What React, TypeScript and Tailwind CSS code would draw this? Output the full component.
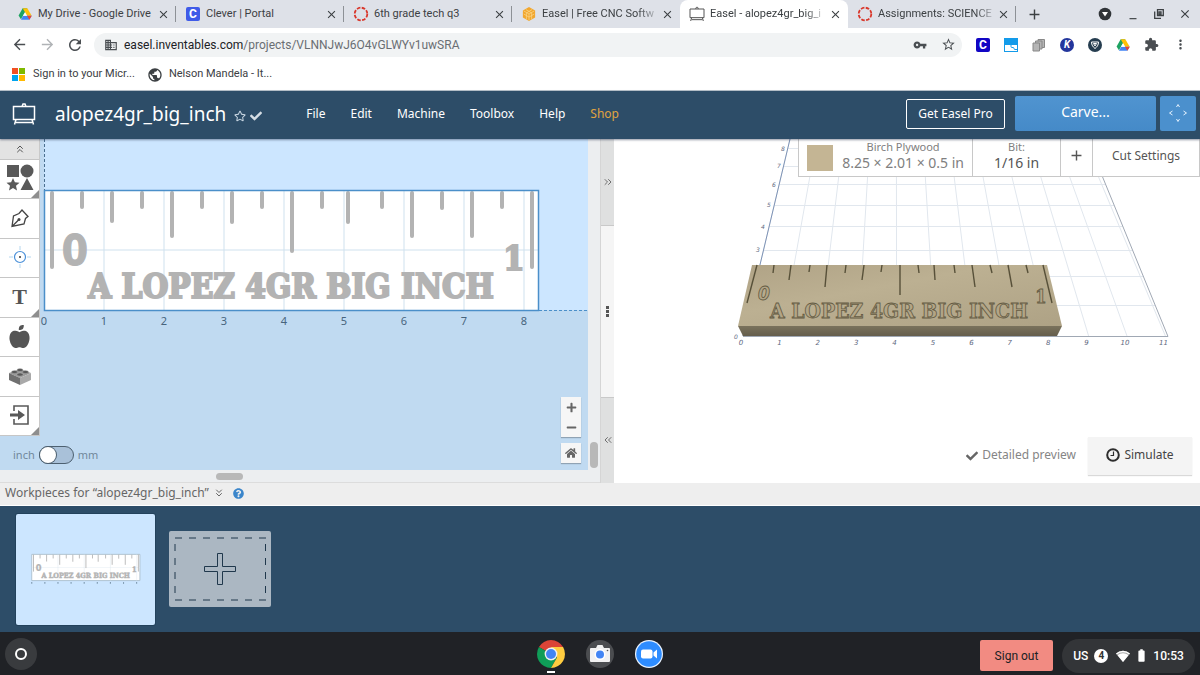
/**
 * @fileoverview Easel project screen inside a Chrome OS browser window:
 * tab strip, toolbar, 2D canvas, 3D preview, workpieces tray and shelf.
 */

import type { ReactNode } from 'react';
import {
  MdArrowBack,
  MdArrowForward,
  MdClose,
  MdDomain,
  MdExtension,
  MdMinimize,
  MdMoreVert,
  MdAdd,
  MdPublic,
  MdRefresh,
  MdStarBorder,
  MdVpnKey,
  MdBatteryFull,
} from 'react-icons/md';
import { FaAppleAlt, FaCheck, FaHome, FaMinus, FaPlus, FaQuestionCircle, FaRegStar } from 'react-icons/fa';
import { ChevronsDown, ChevronsLeft, ChevronsRight, ChevronsUp } from 'lucide-react';

const SLAB = '"DejaVu Serif Condensed", "DejaVu Serif", serif';
const BLOCK = '"DejaVu Sans Condensed", "DejaVu Sans", sans-serif';

/* ---------- Logos ---------- */

function DriveLogo() {
  return (
    <svg viewBox="0 0 24 22" className="h-3.5 w-3.5 shrink-0">
      <path d="M8 1h8L5 20 1 13.500z" fill="#1ea362" />
      <path d="M8 1h8l7.500 13h-8z" fill="#ffc107" />
      <path d="M9 14h14.500L19.500 21H5z" fill="#4285f4" />
      <path d="M15.500 14h8L19.500 21z" fill="#ea4335" />
      <path d="M12 8l3.500 6H8.500z" fill="#fff" />
    </svg>
  );
}

function CleverLogo({ color }: { color: string }) {
  return (
    <span className="flex h-3.5 w-3.5 shrink-0 items-center justify-center rounded-xs text-[12px] leading-none font-bold text-white" style={{ backgroundColor: color }}>
      C
    </span>
  );
}

function CanvasLogo() {
  return (
    <svg viewBox="0 0 16 16" className="h-4 w-4 shrink-0">
      <circle cx="8" cy="8" r="6.300" fill="none" stroke="#d9372b" strokeWidth="1.800" strokeDasharray="3.550 1.400" />
    </svg>
  );
}

function InventablesLogo() {
  return (
    <svg viewBox="0 0 16 16" className="h-3.5 w-3.5 shrink-0">
      <path d="M8 0l7 4v8l-7 4-7-4V4z" fill="#f2a72e" />
      <path d="M8 8v7M8 8L2 4.500M8 8l6-3.500M5 6.500V14M11 6.500V14M4.500 3l6 3.500M11.500 3l-6 3.500M2 8l6 3.500L14 8" stroke="#fbd88e" strokeWidth=".8" fill="none" />
    </svg>
  );
}

function EaselLogo({ className }: { className: string }) {
  return (
    <svg viewBox="0 0 24 24" className={className} fill="none" stroke="currentColor" strokeWidth="1.500">
      <path d="M1.500 4.500h21v13h-21zM10 4.500l1-2.500h2l1 2.500M4 17.500l-1.500 5M20 17.500l1.500 5M4 20.500h16" />
    </svg>
  );
}

/* ---------- Browser chrome ---------- */

interface TabInfo {
  readonly title: string;
  readonly icon: ReactNode;
  readonly active?: boolean;
  readonly divider?: boolean;
  readonly fade?: boolean;
}

const TABS: readonly TabInfo[] = [
  { title: 'My Drive - Google Drive', icon: <DriveLogo />, divider: true },
  { title: 'Clever | Portal', icon: <CleverLogo color="#3f5be8" />, divider: true },
  { title: '6th grade tech q3', icon: <CanvasLogo />, divider: true },
  { title: 'Easel | Free CNC Softw', icon: <InventablesLogo />, fade: true },
  { title: 'Easel - alopez4gr_big_i', icon: <EaselLogo className="h-4 w-4 shrink-0 text-[#555]" />, active: true, fade: true },
  { title: 'Assignments: SCIENCE', icon: <CanvasLogo />, divider: true, fade: true },
];

function Tab({ title, icon, active, divider, fade }: TabInfo) {
  return (
    <div className={`relative flex h-7 max-w-[168px] min-w-0 flex-1 items-center pr-1.5 pl-2.5 ${active ? 'rounded-t-lg bg-white' : ''}`}>
      <span className="flex w-3.5 shrink-0 justify-center">{icon}</span>
      <span className={`ml-1.5 whitespace-nowrap ${fade ? '[mask-image:linear-gradient(to_right,black_85%,rgba(0,0,0,0.3))]' : ''}`}>{title}</span>
      <button aria-label={`Close ${title}`} className="ml-auto shrink-0">
        <MdClose size={13} />
      </button>
      {divider && <span className="absolute top-1.5 right-0 h-4 w-px bg-[#8d9196]" />}
    </div>
  );
}

function TabStrip() {
  return (
    <div className="flex h-7 shrink-0 items-center bg-[#dee1e8] pl-2 text-[11px] text-[#3c4043]">
      {TABS.map((tab) => (
        <Tab key={tab.title} {...tab} />
      ))}
      <button aria-label="New tab" className="ml-2.5">
        <MdAdd size={17} />
      </button>
      <div className="ml-auto flex shrink-0 items-center gap-3.5 pr-2">
        <svg viewBox="0 0 14 14" className="h-3.5 w-3.5">
          <circle cx="7" cy="7" r="6.300" fill="#303438" />
          <path d="M4 5h6L7 9.500z" fill="#fff" />
        </svg>
        <button aria-label="Minimize"><MdMinimize size={14} /></button>
        <button aria-label="Restore">
          <svg viewBox="0 0 10 10" className="h-2.5 w-2.5" fill="none" stroke="currentColor" strokeWidth="1.300">
            <path d="M3.500.7h5.800v5.800H3.500zM5 3h2v2H5zM.7 2.500v6.800h6.300" />
          </svg>
        </button>
        <button aria-label="Close window"><MdClose size={14} /></button>
      </div>
    </div>
  );
}

function AddressBar() {
  return (
    <div className="flex h-[33px] shrink-0 items-center pr-3 pl-[11px] text-[#4a4e52]">
      <button aria-label="Back"><MdArrowBack size={17} /></button>
      <button aria-label="Forward" className="ml-[11px] text-[#b0b3b6]"><MdArrowForward size={17} /></button>
      <button aria-label="Reload" className="ml-2.5"><MdRefresh size={18} /></button>
      <div className="ml-2.5 flex h-6 min-w-0 flex-1 items-center rounded-full bg-[#f1f3f4] px-2.5">
        <MdDomain size={14} className="shrink-0" />
        <span className="ml-1.5 flex-1 truncate text-[12px] text-[#6a6e73]">
          <span className="text-[#202124]">easel.inventables.com</span>/projects/VLNNJwJ6O4vGLWYv1uwSRA
        </span>
        <MdVpnKey size={14} className="mr-3.5 shrink-0" />
        <MdStarBorder size={15} className="-mr-1 shrink-0" />
      </div>
      <div className="ml-3.5 flex shrink-0 items-center gap-3.5">
        <CleverLogo color="#1206c4" />
        <svg viewBox="0 0 14 14" className="h-3.5 w-3.5">
          <rect width="14" height="14" fill="#139bea" />
          <path d="M1 7h12v6H1z" fill="#fff" />
          <path d="M7 7v1.500q0 1 1 1h1q1 0 1 1t1 1h2" fill="none" stroke="#139bea" />
        </svg>
        <svg viewBox="0 0 14 14" className="h-3.5 w-3.5" fill="#b5b5b5" stroke="#888">
          <path d="M6 1.500h6.500v8H6z" />
          <path d="M3.500 3H10v8H3.500z" />
          <path d="M1 5h6.500v8H1z" />
        </svg>
        <span className="flex h-3.5 w-3.5 items-center justify-center rounded-full bg-[#23369c] text-[10px] leading-none font-bold text-white italic">K</span>
        <svg viewBox="0 0 14 14" className="h-3.5 w-3.5">
          <circle cx="7" cy="7" r="7" fill="#263d50" />
          <path d="M3.500 4h7c0 3-1.500 5-3.500 6.500C5 9 3.500 7 3.500 4zM5.500 5.500L7 8l1.500-2.500z" fill="none" stroke="#fff" />
        </svg>
        <DriveLogo />
        <MdExtension size={15} />
        <button aria-label="Menu"><MdMoreVert size={15} /></button>
      </div>
    </div>
  );
}

function Bookmarks() {
  return (
    <nav className="flex h-[30px] shrink-0 items-center border-b border-[#b9c3cc] pb-0.5 pl-3 text-[11px] text-[#3c4043]">
      <a href="#microsoft" className="flex items-center gap-2">
        <span className="grid h-[13px] w-[13px] grid-cols-2 gap-px">
          <i className="bg-[#f25022]" />
          <i className="bg-[#7fba00]" />
          <i className="bg-[#00a4ef]" />
          <i className="bg-[#ffb900]" />
        </span>
        Sign in to your Micr...
      </a>
      <a href="#mandela" className="ml-3 flex items-center gap-1.5">
        <MdPublic size={16} />
        Nelson Mandela - It...
      </a>
    </nav>
  );
}

/* ---------- Easel header ---------- */

const MENU = ['File', 'Edit', 'Machine', 'Toolbox', 'Help'];

function EaselHeader() {
  return (
    <header className="relative z-10 flex h-12 shrink-0 items-center bg-[#2d4d68] pr-1 pb-0.5 pl-3 text-[12px] text-white shadow-[0_1px_2px_rgba(40,50,80,0.5)]">
      <EaselLogo className="h-6 w-6" />
      <h1 className="ml-[19px] text-[19px] leading-6">alopez4gr_big_inch</h1>
      <FaRegStar size={12} className="mt-1 ml-2 text-[#c8d6e2]" />
      <FaCheck size={12} className="mt-1 ml-1 text-[#d5dde4]" />
      <nav className="ml-11 flex gap-[25px]">
        {MENU.map((item) => (
          <button key={item}>{item}</button>
        ))}
        <a href="#shop" className="text-[#e0a440]">Shop</a>
      </nav>
      <button className="ml-auto h-[30px] w-[99px] rounded-xs border border-white">Get Easel Pro</button>
      <button className="mb-0.5 ml-2.5 h-[35px] w-[141px] rounded-xs bg-gradient-to-b from-[#5094d0] to-[#458ac8] pb-1 text-[14px]">Carve...</button>
      <button aria-label="Jog machine" className="mb-0.5 ml-1 flex h-[35px] w-9 items-center justify-center rounded-xs bg-[#4b90cd]">
        <svg viewBox="0 0 20 20" className="h-5 w-5" fill="none" stroke="#e3f1fd" strokeWidth="1">
          <path d="M8.500 4L10 1.500 11.500 4M8.500 16l1.500 2.500L11.500 16M4.500 8L1.500 10l3 2M15.500 8l3 2-3 2" />
        </svg>
      </button>
    </header>
  );
}

/* ---------- 2D canvas ---------- */

// x position and lower end of every carved tick
const TICKS: readonly [number, number][] = [
  [52, 267], [82, 207], [112, 221], [142, 207], [172, 236], [202, 207], [232, 222], [262, 207], [292, 251],
  [322, 207], [348, 222], [382, 207], [412, 236], [442, 208], [472, 236], [502, 207], [532, 267],
];

const INCHES = [0, 1, 2, 3, 4, 5, 6, 7, 8];

function RulerArt() {
  return (
    <g fill="#b3b3b3" stroke="#b3b3b3" fontFamily={SLAB} fontWeight="bold">
      {TICKS.map(([x, end]) => (
        <path key={x} d={`M${x} 193V${end}`} strokeWidth="4" strokeLinecap="round" />
      ))}
      <text x="75" y="265" fontSize="42" textAnchor="middle" fontFamily={BLOCK}>0</text>
      <text x="514" y="270" fontSize="34" textAnchor="middle" strokeWidth="2">1</text>
      <text x="291" y="298" fontSize="33" textAnchor="middle" strokeWidth="2" strokeLinejoin="miter">A LOPEZ 4GR BIG INCH</text>
    </g>
  );
}

function CanvasDrawing() {
  return (
    <svg viewBox="0 139 588 331" preserveAspectRatio="xMinYMin slice" className="absolute inset-0 h-full w-full bg-[#c0daf1]">
      <path d="M44 139H2000V310H44z" fill="#cce6ff" />
      <path d="M44 190h495v120H44z" fill="#fff" />
      <path d="M44 250h495M104 190v120M164 190v120M224 190v120M284 190v120M344 190v120M404 190v120M464 190v120M524 190v120" stroke="#cfe1ee" />
      <RulerArt />
      <path d="M44.500 190.500h494v120h-494z" fill="none" stroke="#4b8fc9" strokeWidth="1.500" />
      <path d="M44.500 139v51" stroke="#4b6f8f" strokeDasharray="3 2" />
      <path d="M539 310.500h1500" stroke="#4b8fc9" strokeDasharray="3 2" />
      {INCHES.map((n) => (
        <text key={n} x={44 + n * 60} y="325" fontSize="11" textAnchor="middle" fill="#47647d" fontFamily="Noto Sans">{n}</text>
      ))}
    </svg>
  );
}

interface Tool {
  readonly label: string;
  readonly icon: ReactNode;
  readonly more?: boolean;
}

const TOOLS: readonly Tool[] = [
  {
    label: 'Shapes',
    more: true,
    icon: (
      <svg viewBox="0 0 28 28" className="h-7 w-7" fill="#595959">
        <path d="M1 1h12v12H1z" />
        <circle cx="21" cy="7" r="6.500" />
        <path d="M7 14l1.900 4.200 4.600.5-3.500 3.100 1 4.600-4-2.400-4 2.400 1-4.600L.5 18.700l4.600-.5zM21 14l6.500 12h-13z" />
      </svg>
    ),
  },
  {
    label: 'Pen',
    icon: (
      <svg viewBox="0 0 20 20" className="h-5 w-5" fill="none" stroke="#444" strokeWidth="1.300">
        <path d="M2 18.500L3.500 8 9 5.500 12 2l6 6.500-2.500 2L14 16zM2 18.500L8.500 12" />
        <circle cx="9" cy="11.500" r="1.500" fill="#444" stroke="none" />
      </svg>
    ),
  },
  {
    label: 'Drill point',
    icon: (
      <svg viewBox="0 0 22 22" className="h-[22px] w-[22px]" fill="none" stroke="#4a90d9">
        <circle cx="11" cy="11" r="5.500" strokeWidth="1.200" />
        <path d="M11 0v4M11 18v4M0 11h4M18 11h4" stroke="#b4d6ee" />
        <circle cx="11" cy="11" r="1" fill="#333" stroke="none" />
      </svg>
    ),
  },
  { label: 'Text', more: true, icon: <span className="font-['Liberation_Serif',serif] text-[22px] leading-6 font-bold">T</span> },
  { label: 'Icons', icon: <FaAppleAlt size={23} /> },
  {
    label: 'Apps',
    icon: (
      <svg viewBox="0 0 24 18" className="h-[18px] w-6">
        <path d="M1 6l11-4 11 4-11 5z" fill="#9a9a9a" />
        <path d="M1 6l11 5v7L1 13z" fill="#707070" />
        <path d="M23 6l-11 5v7l11-5z" fill="#a9a9a9" />
        <g fill="#595959" stroke="#bbb" strokeWidth=".4">
          <ellipse cx="12" cy="3" rx="3" ry="1.600" />
          <ellipse cx="6.500" cy="5" rx="3" ry="1.600" />
          <ellipse cx="17.500" cy="5" rx="3" ry="1.600" />
          <ellipse cx="12" cy="7.500" rx="3" ry="1.600" />
        </g>
      </svg>
    ),
  },
  {
    label: 'Import',
    more: true,
    icon: (
      <svg viewBox="0 0 20 20" className="h-5 w-5" fill="none" stroke="#595959" strokeWidth="1.600">
        <path d="M4 6V1h14v18H4v-5" />
        <path d="M0 8.500h8V5l7 5-7 5v-3.500H0z" fill="#595959" stroke="none" />
      </svg>
    ),
  },
];

function ToolPalette() {
  return (
    <div className="w-10 border-r border-[#c9c9c9] bg-[#c6c6c6] pb-px text-[#555]">
      <button aria-label="Collapse tools" className="flex h-5 w-full items-center justify-center bg-[#e3e3e3]">
        <ChevronsUp size={12} strokeWidth={2} />
      </button>
      {TOOLS.map((tool) => (
        <button key={tool.label} aria-label={tool.label} className="relative mt-px flex h-[38px] w-full items-center justify-center bg-white pb-0.5 odd:h-[39px]">
          {tool.icon}
          {tool.more && <span className="absolute right-0 bottom-0 h-2 w-2 bg-[#8e8e8e] [clip-path:polygon(100%_0,100%_100%,0_100%)]" />}
        </button>
      ))}
    </div>
  );
}

function CanvasPane() {
  return (
    <section className="flex w-1/2 shrink-0 flex-col bg-[#eceef0]">
      <div className="flex min-h-0 flex-1">
        <div className="relative flex min-w-0 flex-1 flex-col items-start overflow-hidden">
          <CanvasDrawing />
          <div className="relative flex flex-col">
            <ToolPalette />
            <label className="mt-2.5 ml-[13px] flex items-center gap-1 text-[11px] leading-4 text-[#71889b]">
              inch
              <input
                type="checkbox"
                role="switch"
                className="h-[18px] w-[35px] appearance-none rounded-full border border-[#4d6070] bg-[#a9c1d9] before:block before:h-4 before:w-4 before:rounded-full before:bg-white before:shadow-[0_0_0_1px_#4d6070]"
              />
              mm
            </label>
          </div>
          <div className="absolute right-[7px] bottom-[7px] flex flex-col gap-1.5 text-[#666]">
            <div className="flex flex-col bg-[#f6f6f6] shadow-[0_1px_1px_rgba(0,0,0,0.25)]">
              <button aria-label="Zoom in" className="flex h-5 w-5 items-center justify-center"><FaPlus size={11} /></button>
              <button aria-label="Zoom out" className="flex h-5 w-5 items-center justify-center"><FaMinus size={11} /></button>
            </div>
            <button aria-label="Reset view" className="flex h-5 w-5 items-center justify-center bg-[#f6f6f6] shadow-[0_1px_1px_rgba(0,0,0,0.25)]"><FaHome size={12} /></button>
          </div>
        </div>
        <div className="flex w-3 items-end justify-center pb-0.5">
          <span className="h-[26px] w-2 rounded-full bg-[#b8b8b8]" />
        </div>
      </div>
      <div className="h-[13px] shrink-0 border-b border-[#dcdcdc] pt-[3px]">
        <span className="ml-[36%] block h-[7px] w-[27px] rounded-full bg-[#b8b8b8]" />
      </div>
    </section>
  );
}

function Splitter() {
  return (
    <div className="flex w-3.5 shrink-0 flex-col border-l border-[#d5d5d5] text-[#6f6f6f]">
      <button aria-label="Expand canvas" className="flex flex-1 items-center justify-center bg-[#dfe0e0]">
        <ChevronsRight size={12} />
      </button>
      <div className="flex flex-2 flex-col items-center justify-center gap-px border-y border-[#c9c9c9] bg-[#f5f5f5]">
        <i className="h-[3px] w-[3px] bg-[#555]" />
        <i className="h-[3px] w-[3px] bg-[#555]" />
        <i className="h-[3px] w-[3px] bg-[#555]" />
      </div>
      <button aria-label="Expand preview" className="flex flex-1 items-center justify-center bg-[#dfe0e0]">
        <ChevronsLeft size={12} />
      </button>
    </div>
  );
}

/* ---------- 3D preview ---------- */

const GRID_ROWS = [148, 166, 184, 205, 226, 250, 276, 305];
const GRID_COLUMNS = [0, 1, 2, 3, 4, 5, 6, 7, 8, 9, 10, 11];
const HEIGHT_LABELS: readonly [string, number, number][] = [
  ['8', 783, 151], ['7', 779, 168], ['6', 774, 187], ['5', 769, 207], ['4', 763, 229], ['3', 758, 252], ['0', 736, 339],
];

// Carved tick marks on the board: top x, bottom x, bottom y
const CUTS: readonly [number, number, number][] = [
  [757, 747, 303], [774, 773, 273], [791, 789, 280], [810, 809, 272], [827, 825, 287], [846, 845, 273], [864, 862, 280], [882, 881, 272],
  [900, 900, 295], [918, 919, 273], [934, 935, 280], [954, 955, 273], [972, 975, 287], [990, 992, 273], [1008, 1012, 287], [1026, 1028, 273], [1043, 1052, 303],
];

function CarvedText() {
  return (
    <>
      <text x="764" y="300" fontSize="19" fontStyle="italic" fontFamily={BLOCK}>0</text>
      <text x="1041" y="303" fontSize="18">1</text>
      <text x="899" y="318" fontSize="21">A LOPEZ 4GR BIG INCH</text>
    </>
  );
}

function PreviewDrawing() {
  const left = (y: number) => 743 + ((336 - y) * 47) / 197;
  const right = (y: number) => 1168 - ((336 - y) * 81) / 197;
  return (
    <svg viewBox="614 139 586 344" preserveAspectRatio="xMinYMin slice" className="absolute inset-0 h-full w-full">
      <defs>
        <linearGradient id="board" x1="0" y1="0" x2="1" y2="1">
          <stop offset="0" stopColor="#b0a386" />
          <stop offset=".4" stopColor="#bcb092" />
          <stop offset="1" stopColor="#aea285" />
        </linearGradient>
        <linearGradient id="edge" x1="0" y1="0" x2="0" y2="1">
          <stop offset="0" stopColor="#7a725c" />
          <stop offset="1" stopColor="#655e4c" />
        </linearGradient>
      </defs>
      <g stroke="#e1e7ee" fill="none">
        {GRID_ROWS.map((y) => (
          <path key={y} d={`M${left(y)} ${y}.5H${right(y)}`} />
        ))}
        {GRID_COLUMNS.map((n) => (
          <path key={n} d={`M${743 + n * 38.4} 336L${790 + n * 26.6} 139`} />
        ))}
      </g>
      <path d="M743 336L790 139" stroke="#7e93b5" fill="none" />
      <path d="M743 336.500H1168L1087 139" stroke="#a0a8b4" fill="none" />
      <path d="M752 265h295l15 61H738z" fill="url(#board)" />
      <path d="M738 326h324l-5 10H743z" fill="url(#edge)" />
      <g stroke="#575039" fill="none" strokeWidth="1.400">
        {CUTS.map(([top, bottom, y]) => (
          <path key={top} d={`M${top} 265L${bottom} ${y}`} />
        ))}
      </g>
      <g fontFamily={SLAB} fontWeight="bold" textAnchor="middle" fill="#b2a587" stroke="#645b43" strokeWidth=".8">
        <CarvedText />
      </g>
      <g fontFamily="DejaVu Sans" fontSize="7" fontStyle="italic" textAnchor="middle" fill="#5e6880">
        {GRID_COLUMNS.map((n) => (
          <text key={n} x={741 + n * 38.4} y="345">{n}</text>
        ))}
        {HEIGHT_LABELS.map(([label, x, y]) => (
          <text key={label} x={x} y={y} fontSize="6">{label}</text>
        ))}
      </g>
    </svg>
  );
}

function PreviewPane() {
  return (
    <section className="relative min-w-0 flex-1 overflow-hidden bg-white text-[12px] text-[#555]">
      <PreviewDrawing />
      <div className="absolute top-0 right-0 flex h-[38px] divide-x divide-[#c8c8c8] border-x border-b border-[#c8c8c8] bg-white">
        <button className="flex w-[174px] items-center justify-between px-2 text-[#808080]">
          <span className="h-[26px] w-[26px] bg-[#c4b594]" />
          <span className="flex flex-col pb-1.5 leading-4">
            <span className="text-[11px]">Birch Plywood</span>
            <span className="text-[14px]">8.25 × 2.01 × 0.5 in</span>
          </span>
        </button>
        <button className="flex w-[88px] flex-col items-center leading-4">
          <span className="text-[11px] text-[#808080]">Bit:</span>
          <span className="text-[14px]">1/16 in</span>
        </button>
        <button aria-label="Add bit" className="flex w-8 items-center justify-center pb-1"><MdAdd size={17} /></button>
        <button className="w-[106px] pb-1">Cut Settings</button>
      </div>
      <div className="absolute right-2 bottom-2 flex items-center">
        <button className="flex items-center gap-1 pb-0.5 text-[#858585]">
          <FaCheck size={12} className="mt-0.5 text-[#666]" />
          Detailed preview
        </button>
        <button className="ml-3 flex h-[38px] w-[104px] items-center justify-center gap-1 bg-[#f4f4f4] pb-0.5 text-[#444] shadow-[0_1px_1px_rgba(0,0,0,0.15)]">
          <svg viewBox="0 0 14 14" className="h-3.5 w-3.5" fill="none" stroke="#2d2d2d">
            <circle cx="7" cy="7" r="5.800" strokeWidth="2" />
            <path d="M7.500 3.500v4h-3" strokeWidth="1.200" />
          </svg>
          Simulate
        </button>
      </div>
    </section>
  );
}

/* ---------- Workpieces and shelf ---------- */

function Workpieces() {
  return (
    <section className="shrink-0">
      <div className="flex h-[23px] items-center border-b border-white bg-[#eee] pb-0.5 pl-[5px] text-[12px] leading-4 text-[#666]">
        Workpieces for “alopez4gr_big_inch”
        <ChevronsDown size={12} className="ml-1" />
        <FaQuestionCircle size={11} className="ml-2 text-[#3b86cb]" />
      </div>
      <div className="flex h-[126px] items-center gap-3.5 bg-[#2d4d68] px-4">
        <button aria-label="Workpiece 1" className="flex h-[111px] w-[139px] items-center justify-center rounded-xs bg-[#cce6ff] shadow-[0_0_0_1px_#23425c]">
          <svg viewBox="36 184 508 146" className="h-[32px] w-[111px]">
            <path d="M44 190h495v120H44z" fill="#fff" stroke="#a9bccb" strokeWidth="4" />
            <path d="M44 250h495M164 190v120M284 190v120M404 190v120M524 190v120" stroke="#dfe8ee" strokeWidth="2" />
            <RulerArt />
            {INCHES.map((n) => (
              <path key={n} d={`M${44 + n * 60} 317v8`} stroke="#7d98ae" strokeWidth="5" />
            ))}
          </svg>
        </button>
        <button aria-label="Add workpiece" className="flex h-[76px] w-[102px] items-center justify-center rounded-xs bg-[#abb7c2]">
          <svg viewBox="0 0 102 76" className="h-full w-full" fill="none" stroke="#20384c">
            <path d="M6 7h91M6 69h91" strokeDasharray="7 7" />
            <path d="M6 13v52M96.500 13v52" strokeDasharray="7 7" />
            <path d="M48.500 22.500h5v13h13v5h-13v13h-5v-13h-13v-5h13z" />
          </svg>
        </button>
      </div>
    </section>
  );
}

function Shelf() {
  return (
    <footer className="relative flex h-[43px] shrink-0 items-center justify-between bg-[#202226] pr-[5px] pl-[5px] text-[12px] text-white">
      <button aria-label="Launcher" className="flex h-8 w-8 items-center justify-center rounded-full bg-[#393b3e]">
        <span className="h-3 w-3 rounded-full border-2 border-white" />
      </button>
      <div className="absolute left-1/2 flex -translate-x-1/2 gap-[21px]">
        <button aria-label="Chrome" className="relative">
          <svg viewBox="0 0 28 28" className="h-7 w-7">
            <path d="M14 14L1.900 7A14 14 0 0 1 26.100 7z" fill="#db4437" />
            <path d="M14 14L1.900 7A14 14 0 0 0 14 28L20 17.500z" fill="#0f9d58" />
            <path d="M14 7h12.100A14 14 0 0 1 14 28l6-10.500z" fill="#ffcd40" />
            <circle cx="14" cy="14" r="6.400" fill="#f1f1f1" />
            <circle cx="14" cy="14" r="5" fill="#4285f4" />
          </svg>
          <span className="absolute top-[31px] left-[10px] h-0.5 w-2 bg-white" />
        </button>
        <button aria-label="Camera">
          <svg viewBox="0 0 28 28" className="h-7 w-7">
            <circle cx="14" cy="14" r="14" fill="#4b4d50" />
            <path d="M5 8h5l1.500-3h5L18 8h5a1 1 0 0 1 1 1v12a1 1 0 0 1-1 1H5a1 1 0 0 1-1-1V9a1 1 0 0 1 1-1z" fill="#f1f1f1" />
            <circle cx="14" cy="14.500" r="5.500" fill="#fff" />
            <circle cx="14" cy="14.500" r="4" fill="#4285f4" />
            <circle cx="21.500" cy="10.500" r=".8" fill="#555" />
          </svg>
        </button>
        <button aria-label="Zoom">
          <svg viewBox="0 0 28 28" className="h-7 w-7">
            <circle cx="14" cy="14" r="14" fill="#e9f3ff" />
            <circle cx="14" cy="14" r="12.800" fill="#2d8cff" />
            <rect x="6" y="9.500" width="11.500" height="9" rx="2" fill="#fff" />
            <path d="M18.500 12.500l3.500-3v9l-3.500-3z" fill="#fff" />
          </svg>
        </button>
      </div>
      <div className="flex items-center gap-[9px]">
        <button className="mt-1 h-[31px] w-[73px] rounded-xs bg-[#f28b82] text-[#202124]">Sign out</button>
        <button className="mt-1 flex h-[34px] w-[133px] items-center justify-center rounded-full bg-[#333538] font-medium">
          US
          <span className="ml-1.5 flex h-3.5 w-3.5 items-center justify-center rounded-full bg-white text-[10px] leading-none font-bold text-[#333]">4</span>
          <svg viewBox="0 0 14 12" className="ml-2 h-3 w-3.5">
            <path d="M0 3.500a10.500 10.500 0 0 1 14 0L7 12z" fill="#aaa" />
            <path d="M1.500 5.300a8.500 8.500 0 0 1 11 0L7 12zM0 3.500A10.500 10.500 0 0 1 14 3.500l-.8 1a9.500 9.500 0 0 0-12.400 0z" fill="#fff" />
          </svg>
          <MdBatteryFull size={15} className="ml-1" />
          <span className="ml-1">10:53</span>
        </button>
      </div>
    </footer>
  );
}

export default function App() {
  return (
    <div className="flex h-screen flex-col overflow-hidden bg-white font-['Roboto',sans-serif]">
      <TabStrip />
      <AddressBar />
      <Bookmarks />
      <div className="flex min-h-0 flex-1 flex-col font-['Noto_Sans',sans-serif]">
        <EaselHeader />
        <main className="flex min-h-0 flex-1">
          <CanvasPane />
          <Splitter />
          <PreviewPane />
        </main>
        <Workpieces />
      </div>
      <Shelf />
    </div>
  );
}
